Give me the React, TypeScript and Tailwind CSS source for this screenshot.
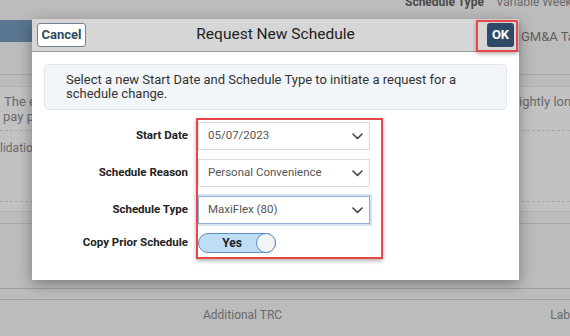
import React from 'react'

const Chevron = () => (
  <svg width="11" height="7" viewBox="0 0 11 7" fill="none">
    <path d="M1 1l4.5 4.5L10 1" stroke="#444" strokeWidth="1.6" strokeLinecap="round" strokeLinejoin="round" />
  </svg>
)

const Select = ({ value, focus }: { value: string; focus?: boolean }) => (
  <div
    className={
      'flex h-[28px] w-[172px] items-center justify-between bg-white pl-[9px] pr-[6px] text-[11.5px] text-[#555] ' +
      (focus ? 'border border-[#8fb0d0] shadow-[0_0_0_2px_#d5e3f0]' : 'border border-[#dcdcdc]')
    }
  >
    <span>{value}</span>
    <Chevron />
  </div>
)

const Row = ({ label, children }: { label: string; children: React.ReactNode }) => (
  <div className="flex items-center gap-[10px]">
    <div className="w-[156px] text-right text-[11.5px] font-bold text-[#222]">{label}</div>
    {children}
  </div>
)

export default function App() {
  return (
    <div
      className="relative h-[336px] w-[570px] overflow-hidden bg-[#bcbcbc] text-[#6a6a6a]"
      style={{ fontFamily: 'Roboto, "Liberation Sans", sans-serif' }}
    >
      {/* page behind the overlay */}
      <div className="-mt-[7px] flex h-[27px] items-start gap-[12px] whitespace-nowrap pl-[405px] text-[12px]">
        <span className="font-bold text-[#4a4a4a]">Schedule Type</span>
        <span>Variable Week</span>
      </div>
      <div className="flex h-[54px] items-start justify-between">
        <div className="h-[22px] w-[40px] bg-[#5a7690]" />
        <span className="mt-[7px] w-[49px] overflow-hidden whitespace-nowrap text-[13px] text-[#5e5e5e]">GM&amp;A Tas</span>
      </div>
      <div className="h-[12px] border-t border-[#a9a9a9]" />
      <div className="h-[126px] border-y border-[#b2b2b2] bg-[#c2c2c2] text-[13px]">
        <div className="flex justify-between pt-[7px] leading-[16px]">
          <span className="pl-[4px]">The e</span>
          <span className="w-[51px] overflow-hidden whitespace-nowrap">ightly lon</span>
        </div>
        <div className="pl-[3px] leading-[14px]">pay p</div>
        <div className="mt-[6px] border-t border-dashed border-[#a8a8a8]" />
        <div className="pt-[8px] text-[12px]">lidatio</div>
        <div className="mt-[44px] border-t border-dashed border-[#a8a8a8]" />
      </div>
      <div className="mt-[11px] h-[65px] border-t border-[#a9a9a9]" />
      <div className="h-[11px] border-t border-[#9e9e9e]" />
      <div className="flex border-t border-[#a0a0a0] pt-[6px] text-[12px]">
        <span className="w-[553px] pl-[203px]">Additional TRC</span>
        <span>Lab</span>
      </div>

      {/* dialog */}
      <div className="absolute left-[32px] top-[19px] flex h-[261px] w-[487px] flex-col bg-white shadow-[0_4px_14px_rgba(0,0,0,0.35)]">
        <div className="grid h-[33px] grid-cols-[1fr_auto_1fr] items-center border-b border-[#9c9c9c] bg-[#d6d6d6] px-[5px]">
          <button className="h-[24px] w-[49px] justify-self-start rounded-[3px] border border-[#6f8296] bg-white text-[13px] font-bold text-[#2e4a66]">
            Cancel
          </button>
          <div className="text-[15.5px] text-[#222]">Request New Schedule</div>
          <button className="h-[24px] w-[27px] justify-self-end rounded-[3px] bg-[#2d4b69] text-[13px] font-bold text-white">OK</button>
        </div>
        <div className="mx-[12px] mt-[12px] rounded-[5px] border border-[#e1e6ec] bg-[#f2f5f9] py-[8px] pl-[21px] pr-[26px] text-[13px] leading-[14px] text-[#333]">
          Select a new Start Date and Schedule Type to initiate a request for a schedule change.
        </div>
        <div className="mt-[12px] flex flex-col gap-[9px]">
          <Row label="Start Date">
            <Select value="05/07/2023" />
          </Row>
          <Row label="Schedule Reason">
            <Select value="Personal Convenience" />
          </Row>
          <Row label="Schedule Type">
            <Select value="MaxiFlex (80)" focus />
          </Row>
          <Row label="Copy Prior Schedule">
            <div className="relative flex h-[20px] w-[78px] items-center rounded-full border border-[#5d8fc0] bg-[#bfdef5]">
              <span className="w-[66px] text-center text-[12px] font-bold text-[#222]">Yes</span>
              <div className="absolute right-[-1px] top-[-1px] h-[20px] w-[20px] rounded-full border border-[#5d8fc0] bg-[#f4f4f4]" />
            </div>
          </Row>
        </div>
      </div>

      {/* red annotation boxes */}
      <div className="absolute left-[476px] top-[20px] h-[32px] w-[42px] border-2 border-[#e8454d] shadow-[0_2px_4px_rgba(0,0,0,0.3)]" />
      <div className="absolute left-[196px] top-[118px] h-[141px] w-[187px] border-2 border-[#e8454d] shadow-[0_2px_4px_rgba(0,0,0,0.3)]" />
    </div>
  )
}
